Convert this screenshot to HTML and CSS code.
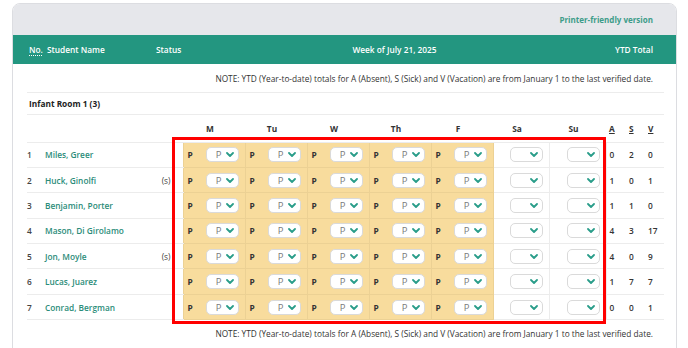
FILE: index.html
```html
<!DOCTYPE html>
<html>
<head>
<meta charset="utf-8">
<link rel="stylesheet" href="styles.css">
</head>
<body>
<div class="card">
  <div class="topbar"><a class="printer">Printer-friendly version</a></div>
  <div class="band">
    <span class="b-no"><abbr>No.</abbr></span>
    <span class="b-name">Student Name</span>
    <span class="b-status">Status</span>
    <span class="b-week">Week of July 21, 2025</span>
    <span class="b-ytd">YTD Total</span>
  </div>
  <div class="content">
    <div class="note">NOTE: YTD (Year-to-date) totals for A (Absent), S (Sick) and V (Vacation) are from January 1 to the last verified date.</div>
    <div class="room">Infant Room 1 (3)</div>
    <div class="tablewrap">
      <table class="att">
        <colgroup>
          <col class="c-no"><col class="c-name"><col class="c-status">
          <col class="c-day"><col class="c-day"><col class="c-day"><col class="c-day"><col class="c-day">
          <col class="c-sa"><col class="c-su">
          <col class="c-a"><col class="c-s"><col class="c-v">
        </colgroup>
        <thead>
          <tr>
            <th></th><th></th><th></th>
            <th class="dh">M</th><th class="dh">Tu</th><th class="dh">W</th><th class="dh">Th</th><th class="dh">F</th>
            <th class="dh">Sa</th><th class="dh">Su</th>
            <th class="yh"><u>A</u></th><th class="yh"><u>S</u></th><th class="yh"><u>V</u></th>
          </tr>
        </thead>
        <tbody id="rows"></tbody>
      </table>
      <div class="highlight"></div>
    </div>
    <div class="note bottom">NOTE: YTD (Year-to-date) totals for A (Absent), S (Sick) and V (Vacation) are from January 1 to the last verified date.</div>
  </div>
</div>
<script src="app.js"></script>
</body>
</html>
```

FILE: app.js
```js
const students = [
  [1, "Miles, Greer", "", 0, 2, 0],
  [2, "Huck, Ginolfi", "(s)", 1, 0, 1],
  [3, "Benjamin, Porter", "", 1, 1, 0],
  [4, "Mason, Di Girolamo", "", 4, 3, 17],
  [5, "Jon, Moyle", "(s)", 4, 0, 9],
  [6, "Lucas, Juarez", "", 1, 7, 7],
  [7, "Conrad, Bergman", "", 0, 0, 1]
];
const chev = '<svg class="chev" width="8" height="5" viewBox="0 0 8 5"><path d="M1 1 L4 4 L7 1" fill="none" stroke="#2a9d8a" stroke-width="1.8" stroke-linecap="round" stroke-linejoin="round"/></svg>';
const tbody = document.getElementById("rows");
let html = "";
for (const s of students) {
  html += "<tr>";
  html += `<td class="no">${s[0]}</td><td class="name">${s[1]}</td><td class="status">${s[2]}</td>`;
  for (let d = 0; d < 5; d++) {
    html += `<td class="day"><div class="daycell"><b>P</b><span class="sel"><span class="val">P</span>${chev}</span></div></td>`;
  }
  for (let d = 0; d < 2; d++) {
    html += `<td class="wk"><div class="daycell end"><span class="sel"><span class="val"></span>${chev}</span></div></td>`;
  }
  html += `<td class="num">${s[3]}</td><td class="num">${s[4]}</td><td class="num">${s[5]}</td>`;
  html += "</tr>";
}
tbody.innerHTML = html;
```

FILE: styles.css
```css
* { box-sizing: border-box; }
body {
  margin: 0;
  background: #fff;
  font-family: "Open Sans", sans-serif;
  color: #333;
}
.card {
  margin: 3px 0 0 12px;
  width: 665px;
  height: 360px;
  border: 1px solid #dcdde1;
  border-radius: 8px 8px 0 0;
  overflow: hidden;
  background: #fff;
}
.topbar {
  height: 31px;
  background: #e6e7eb;
  display: flex;
  align-items: center;
  justify-content: flex-end;
  padding-right: 23px;
}
.printer {
  font-size: 8px;
  font-weight: 700;
  color: #3d9c89;
}
.band {
  height: 29px;
  background: #239680;
  color: #fff;
  display: grid;
  grid-template-columns: 16px 112px 28px 423px 58px;
  align-items: center;
  padding: 0 12px 0 14px;
  font-size: 8.3px;
  font-weight: 600;
}
.band abbr { text-decoration: underline dotted; text-underline-offset: 2px; }
.b-no { padding-left: 2px; }
.b-name { padding-left: 4px; }
.b-status { padding-left: 1px; }
.b-week { text-align: center; }
.b-ytd { text-align: right; padding-right: 11px; }
.content {
  padding: 0 12px 0 14px;
}
.note {
  height: 29px;
  line-height: 30px;
  font-size: 8.3px;
  text-align: right;
  padding-right: 11px;
  border-bottom: 1.5px solid #ececec;
  color: #333;
}
.note.bottom { border-bottom: none; height: 27px; line-height: 27px; }
.room {
  height: 22px;
  line-height: 21px;
  padding-left: 2px;
  font-size: 8.3px;
  font-weight: 700;
  color: #222;
  border-bottom: 1.5px solid #ececec;
}
.tablewrap { position: relative; }
.att {
  width: 637px;
  table-layout: fixed;
  border-collapse: collapse;
  font-size: 8.3px;
}
.c-no { width: 16px; }
.c-name { width: 112px; }
.c-status { width: 28px; }
.c-day { width: 62px; }
.c-sa { width: 56px; }
.c-su { width: 57px; }
.c-a { width: 20px; }
.c-s { width: 19px; }
.c-v { width: 19px; }
.att th {
  height: 27px;
  font-weight: 700;
  color: #333;
  padding: 0;
  border-bottom: 1.5px solid #ececec;
}
.att th.dh { text-align: center; padding-right: 8px; }
.att th.yh { text-align: left; padding-left: 3px; }
.att th.yh u { text-decoration-thickness: 1px; text-underline-offset: 1px; }
.att td {
  height: 25.4px;
  padding: 0;
  border-bottom: 1.5px solid #ececec;
}
.att td.no { padding-left: 0; color: #444; font-weight: 600; }
.att td.name { padding-left: 2px; color: #2b8c79; font-weight: 600; }
.att td.status { text-align: right; padding-right: 12px; color: #444; }
.att td.day {
  background: #f8dc9d;
  border: 1px solid #ecd194;
}
.att td.wk {
  border-left: 1px solid #ececec;
  border-right: 1px solid #ececec;
}
.att td.num { padding-left: 3px; color: #333; font-weight: 600; }
.daycell {
  display: flex;
  align-items: center;
  justify-content: space-between;
  padding: 0 6px 0 4px;
}
.daycell.end { justify-content: flex-end; padding-right: 6px; }
.daycell b { font-weight: 700; color: #333; }
.sel {
  width: 33px;
  height: 15px;
  background: #fff;
  border: 1px solid #dadada;
  border-radius: 5px;
  display: flex;
  align-items: center;
  justify-content: flex-end;
  padding-right: 4px;
  gap: 4px;
}
.sel .val { color: #7a7a7a; font-size: 9.5px; }
.chev { display: block; }
.highlight {
  position: absolute;
  left: 145px;
  top: 22px;
  width: 434px;
  height: 187px;
  border: 3.5px solid #ff0000;
  pointer-events: none;
}
```
